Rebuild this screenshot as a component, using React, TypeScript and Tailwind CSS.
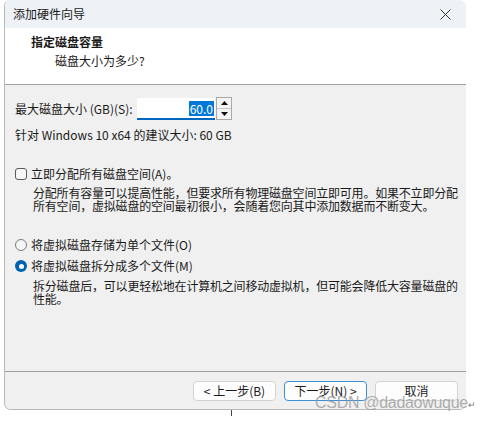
import React from 'react';

const font = { fontFamily: '"Segoe UI", "Noto Sans CJK SC", sans-serif' };

function Btn({ children, primary = false }: { children: React.ReactNode; primary?: boolean }) {
  return (
    <div
      className={`w-[83px] h-[20px] rounded-[4px] bg-[#fdfdfd] flex items-center justify-center text-[12px] text-[#1b1b1b] border ${
        primary ? 'border-[#3d8fd6]' : 'border-[#d3d3d3]'
      }`}
    >
      {children}
    </div>
  );
}

function Radio({ checked }: { checked?: boolean }) {
  return checked ? (
    <span className="w-[12px] h-[12px] rounded-full bg-[#0063b1] flex items-center justify-center">
      <span className="w-[5px] h-[5px] rounded-full bg-white" />
    </span>
  ) : (
    <span className="w-[12px] h-[12px] rounded-full border border-[#7a7a7a] bg-[#f6f6f6]" />
  );
}

export default function App() {
  return (
    <div className="relative w-[481px] h-[421px] bg-white overflow-hidden" style={font}>
      <div className="ml-[4px] w-[462px] h-[410px] flex flex-col border-l border-b border-[#b9b9b9] rounded-t-[6px] rounded-b-[7px] overflow-hidden text-[#1a1a1a]">
        {/* title bar */}
        <div className="h-[28px] shrink-0 bg-[#eef2f7] flex items-center justify-between pl-[8px] pr-[14px]">
          <span className="text-[12px]">添加硬件向导</span>
          <svg width="11" height="11" viewBox="0 0 11 11" className="mr-[1px]">
            <path d="M0.5 0.5 L10.5 10.5 M10.5 0.5 L0.5 10.5" stroke="#333" strokeWidth="1" />
          </svg>
        </div>

        {/* header */}
        <div className="h-[57px] shrink-0 bg-white border-b border-[#a0a0a0] pl-[26px] pt-[6px]">
          <div className="text-[12px] font-bold leading-[16px]">指定磁盘容量</div>
          <div className="text-[12px] leading-[16px] mt-[3px] pl-[24px]">磁盘大小为多少?</div>
        </div>

        {/* body */}
        <div className="flex-1 bg-[#f0f0f0] flex flex-col pl-[10px] text-[12px]">
          <div className="mt-[13px] h-[22px] flex items-center">
            <span className="w-[122px]">最大磁盘大小 (GB)(S):</span>
            <div className="w-[78px] h-[22px] bg-white border-b-2 border-[#0067c0] flex items-center justify-end pr-[1px]">
              <span className="bg-[#0078d7] text-white leading-[15px] px-[1px]">60.0</span>
            </div>
            <div className="ml-[1px] w-[16px] h-[23px] -mt-[1px] border border-[#a8a8a8] bg-[#f4f4f4] flex flex-col">
              <div className="flex-1 flex items-center justify-center border-b border-[#c8c8c8]">
                <svg width="7" height="4" viewBox="0 0 7 4"><path d="M3.5 0 L7 4 L0 4 Z" fill="#111" /></svg>
              </div>
              <div className="flex-1 flex items-center justify-center">
                <svg width="7" height="4" viewBox="0 0 7 4"><path d="M0 0 L7 0 L3.5 4 Z" fill="#111" /></svg>
              </div>
            </div>
          </div>

          <div className="mt-[7px] h-[16px] leading-[16px]">针对 Windows 10 x64 的建议大小: 60 GB</div>

          <div className="mt-[23px] h-[16px] flex items-center gap-[4px]">
            <span className="w-[12px] h-[12px] rounded-[3px] border border-[#5a5a5a] bg-[#f6f6f6]" />
            <span>立即分配所有磁盘空间(A)。</span>
          </div>
          <div className="mt-[4px] ml-[18px] leading-[13px] whitespace-nowrap tracking-[-0.2px]">
            <div>分配所有容量可以提高性能，但要求所有物理磁盘空间立即可用。如果不立即分配</div>
            <div>所有空间，虚拟磁盘的空间最初很小，会随着您向其中添加数据而不断变大。</div>
          </div>

          <div className="mt-[24px] h-[18px] flex items-center gap-[4px]">
            <Radio />
            <span>将虚拟磁盘存储为单个文件(O)</span>
          </div>
          <div className="mt-[3px] h-[18px] flex items-center gap-[4px]">
            <Radio checked />
            <span>将虚拟磁盘拆分成多个文件(M)</span>
          </div>
          <div className="mt-[4px] ml-[18px] leading-[13px] whitespace-nowrap tracking-[-0.2px]">
            <div>拆分磁盘后，可以更轻松地在计算机之间移动虚拟机，但可能会降低大容量磁盘的</div>
            <div>性能。</div>
          </div>

          <div className="flex-1" />
        </div>

        {/* footer */}
        <div className="h-[38px] shrink-0 bg-[#f0f0f0] border-t border-[#a0a0a0] flex justify-end gap-[8px] pt-[9px] pr-[8px]">
          <Btn>&lt; 上一步(B)</Btn>
          <Btn primary>下一步(N) &gt;</Btn>
          <Btn>取消</Btn>
        </div>
      </div>

      <div className="absolute left-[231px] top-[410px] w-px h-[6px] bg-[#444]" />

      <div
        className="absolute left-[315px] top-[393px] text-[16px] leading-[19px] tracking-[-0.3px] text-[#9a9a9a]/80 whitespace-nowrap"
        style={{ fontFamily: '"Liberation Sans", Arial, sans-serif' }}
      >
        CSDN @dadaowuque<span className="text-[9px] text-[#777]">↵</span>
      </div>
    </div>
  );
}
